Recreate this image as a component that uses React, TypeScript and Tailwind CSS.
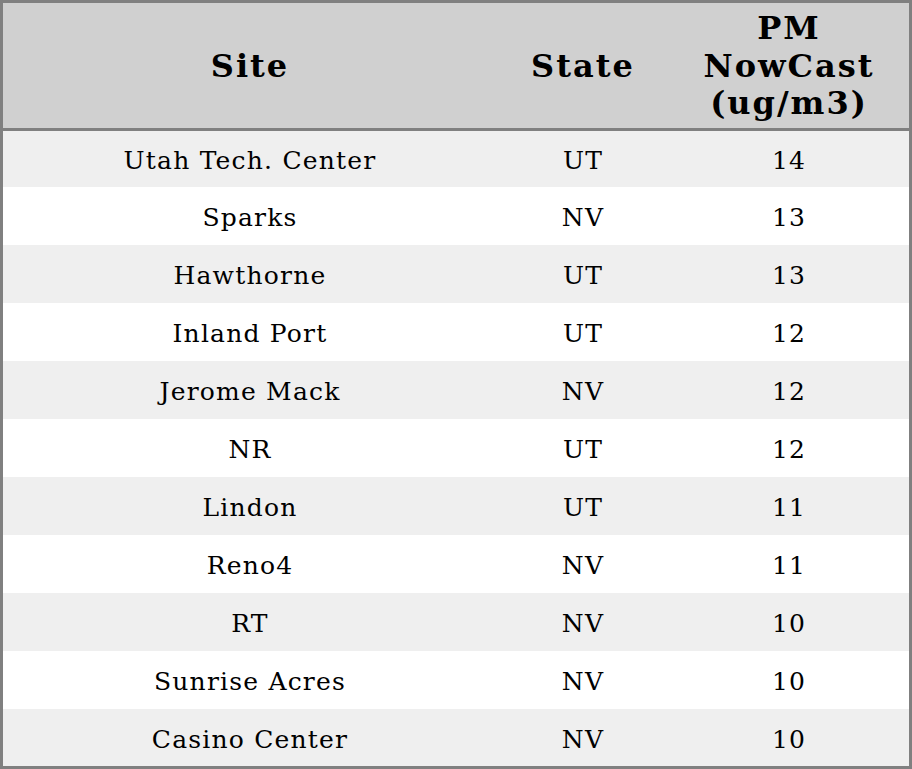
import React from 'react';

type Row = { site: string; state: string; pm: number };

const rows: Row[] = [
  { site: 'Utah Tech. Center', state: 'UT', pm: 14 },
  { site: 'Sparks', state: 'NV', pm: 13 },
  { site: 'Hawthorne', state: 'UT', pm: 13 },
  { site: 'Inland Port', state: 'UT', pm: 12 },
  { site: 'Jerome Mack', state: 'NV', pm: 12 },
  { site: 'NR', state: 'UT', pm: 12 },
  { site: 'Lindon', state: 'UT', pm: 11 },
  { site: 'Reno4', state: 'NV', pm: 11 },
  { site: 'RT', state: 'NV', pm: 10 },
  { site: 'Sunrise Acres', state: 'NV', pm: 10 },
  { site: 'Casino Center', state: 'NV', pm: 10 },
];

const App: React.FC = () => {
  return (
    <div className="w-[912px] h-[769px] border-[3px] border-[#808080] bg-white text-black font-['DejaVu_Serif',serif] flex flex-col">
      <div className="grid grid-cols-[494px_172px_1fr] h-[123px] pt-[2px] bg-[#d0d0d0] border-b-[3px] border-[#808080] box-content text-[32px] font-bold leading-[37.5px] tracking-[2px]">
        <div className="flex items-center justify-center">Site</div>
        <div className="flex items-center justify-center">State</div>
        <div className="flex items-center justify-center text-center">
          PM
          <br />
          NowCast
          <br />
          (ug/m3)
        </div>
      </div>
      {rows.map((r, i) => (
        <div
          key={r.site}
          className={
            'grid grid-cols-[494px_172px_1fr] items-center pt-[3px] text-[25px] leading-[normal] tracking-[1.2px] ' +
            (i % 2 === 0 ? 'bg-[#efefef] ' : 'bg-white ') +
            (i === 0 ? 'h-[56px]' : i === rows.length - 1 ? 'h-[57px]' : 'h-[58px]')
          }
        >
          <div className="text-center">{r.site}</div>
          <div className="text-center">{r.state}</div>
          <div className="text-center">{r.pm}</div>
        </div>
      ))}
    </div>
  );
};

export default App;
